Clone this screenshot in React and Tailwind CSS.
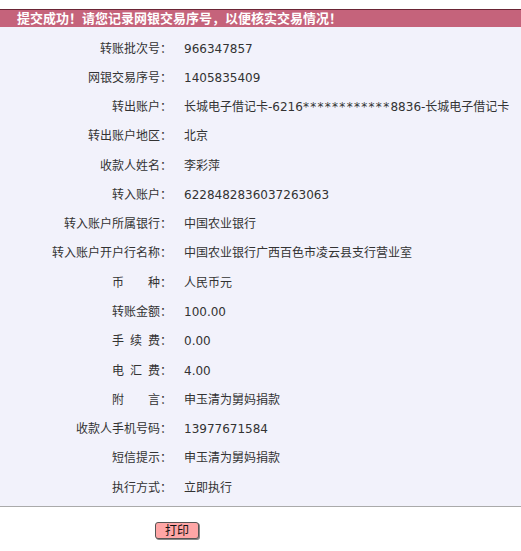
import React from "react";

const rows = [
  ["转账批次号：", "966347857"],
  ["网银交易序号：", "1405835409"],
  [
    "转出账户：",
    <>
      长城电子借记卡-6216<span className="tracking-[1.3px]">************</span>8836-长城电子借记卡
    </>,
  ],
  ["转出账户地区：", "北京"],
  ["收款人姓名：", "李彩萍"],
  ["转入账户：", "6228482836037263063"],
  ["转入账户所属银行：", "中国农业银行"],
  ["转入账户开户行名称：", "中国农业银行广西百色市凌云县支行营业室"],
  ["币\u3000\u3000种：", "人民币元"],
  ["转账金额：", "100.00"],
  ["手\u2002续\u2002费：", "0.00"],
  ["电\u2002汇\u2002费：", "4.00"],
  ["附\u3000\u3000言：", "申玉清为舅妈捐款"],
  ["收款人手机号码：", "13977671584"],
  ["短信提示：", "申玉清为舅妈捐款"],
  ["执行方式：", "立即执行"],
];

export default function App() {
  return (
    <div
      className="w-[521px] h-[551px] bg-white text-[12px] text-[#333]"
      style={{ fontFamily: '"DejaVu Sans", "Noto Sans CJK SC", sans-serif' }}
    >
      <div className="h-[9px]" />
      <div className="h-[18px] border-t border-[#6a2535] bg-[#c5637b] pl-[17px] flex items-center text-white font-bold text-[13px] leading-none">
        提交成功！请您记录网银交易序号，以便核实交易情况！
      </div>
      <div className="bg-[#f2f2fb] border-b border-[#aaaaaa] pt-[7px] pb-[4px]">
        {rows.map(([label, value], i) => (
          <div key={i} className="grid grid-cols-[172px_1fr] gap-x-[12px] h-[29.27px] items-center whitespace-nowrap">
            <div className="text-right">{label}</div>
            <div>{value}</div>
          </div>
        ))}
      </div>
      <div className="pl-[155px] pt-[15px]">
        <button className="w-[44px] h-[17px] bg-[#ffa6a6] border border-[#555] rounded-[3px] shadow-[1px_1px_0_#888] text-[12px] leading-none text-[#111] flex items-center justify-center">
          打印
        </button>
      </div>
    </div>
  );
}
